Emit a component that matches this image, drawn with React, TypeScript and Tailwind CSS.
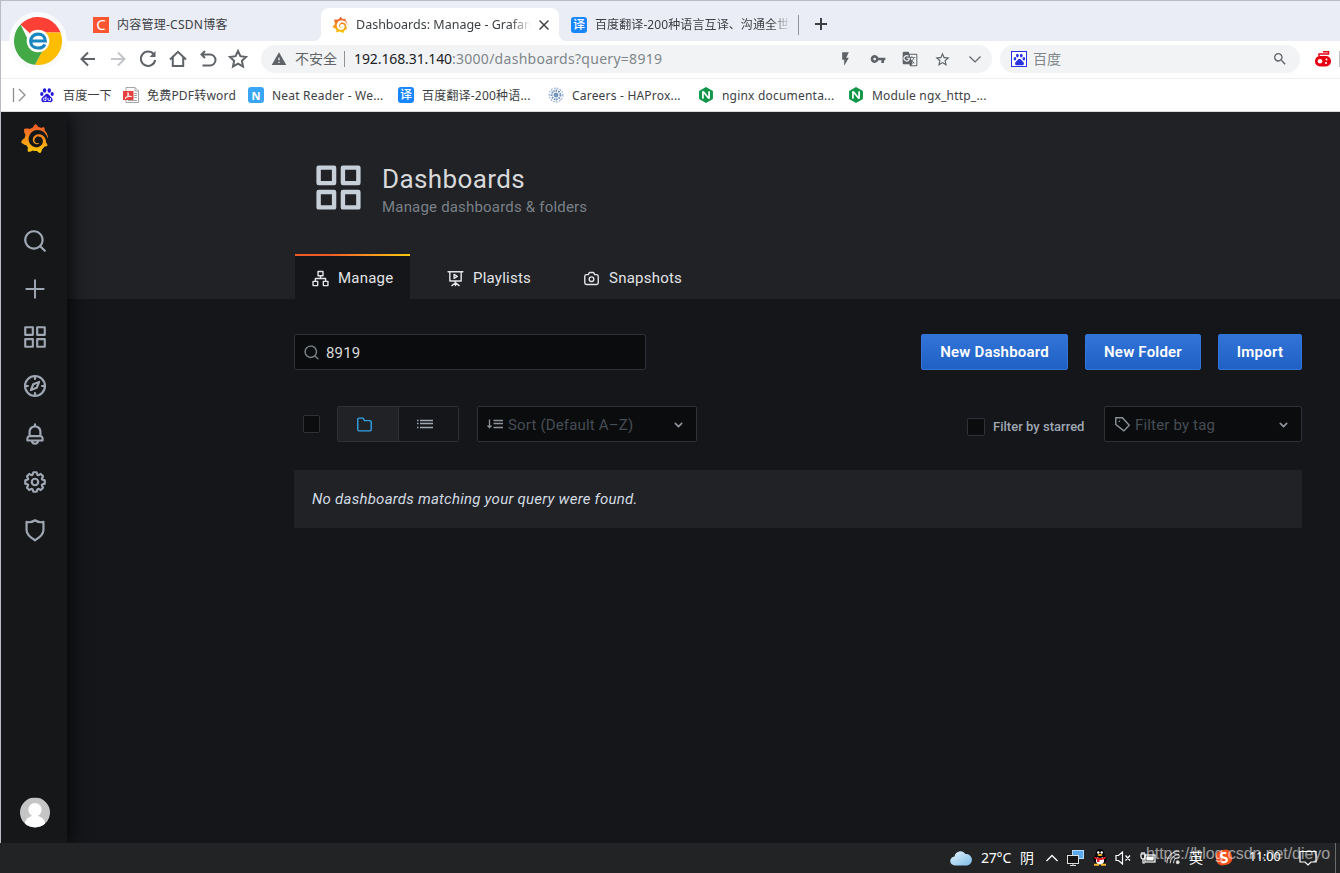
import React from 'react'
import { SiGrafana, SiNginx } from 'react-icons/si'
import { MdFlashOn, MdVpnKey, MdGTranslate, MdStarBorder, MdSearch, MdWarning } from 'react-icons/md'

const UI_FONT = "font-['Noto_Sans','Noto_Sans_CJK_SC',sans-serif]"

type IconProps = { className?: string; children?: React.ReactNode }

// 24x24 solid icon
const Solid: React.FC<IconProps & { d: string }> = ({ className, d }) => (
  <svg viewBox="0 0 24 24" className={className} fill="currentColor">
    <path d={d} />
  </svg>
)

// 24x24 outline icon
const Line: React.FC<IconProps & { width?: number }> = ({ className, width = 2, children }) => (
  <svg
    viewBox="0 0 24 24"
    className={className}
    fill="none"
    stroke="currentColor"
    strokeWidth={width}
    strokeLinecap="round"
    strokeLinejoin="round"
  >
    {children}
  </svg>
)

const paths = {
  search:
    'M21.71,20.29,18,16.61A9,9,0,1,0,16.61,18l3.68,3.68a1,1,0,0,0,1.42,0A1,1,0,0,0,21.71,20.29ZM11,18a7,7,0,1,1,7-7A7,7,0,0,1,11,18Z',
  apps: 'M10,13H3a1,1,0,0,0-1,1v7a1,1,0,0,0,1,1h7a1,1,0,0,0,1-1V14A1,1,0,0,0,10,13ZM9,20H4V15H9ZM21,2H14a1,1,0,0,0-1,1v7a1,1,0,0,0,1,1h7a1,1,0,0,0,1-1V3A1,1,0,0,0,21,2ZM20,9H15V4h5Zm1,4H14a1,1,0,0,0-1,1v7a1,1,0,0,0,1,1h7a1,1,0,0,0,1-1V14A1,1,0,0,0,21,13Zm-1,7H15V15h5ZM10,2H3A1,1,0,0,0,2,3v7a1,1,0,0,0,1,1h7a1,1,0,0,0,1-1V3A1,1,0,0,0,10,2ZM9,9H4V4H9Z',
  bell: 'M18,13.18V10a6,6,0,0,0-5-5.91V3a1,1,0,0,0-2,0V4.09A6,6,0,0,0,6,10v3.18A3,3,0,0,0,4,16v2a1,1,0,0,0,1,1H8.14a4,4,0,0,0,7.72,0H19a1,1,0,0,0,1-1V16A3,3,0,0,0,18,13.18ZM8,10a4,4,0,0,1,8,0v3H8Zm4,10a2,2,0,0,1-1.72-1h3.44A2,2,0,0,1,12,20Zm6-3H6V16a1,1,0,0,1,1-1H17a1,1,0,0,1,1,1Z',
  cog: 'M21.32,9.55l-1.89-.63.89-1.78A1,1,0,0,0,20.13,6L18,3.87a1,1,0,0,0-1.15-.19l-1.78.89-.63-1.89A1,1,0,0,0,13.5,2h-3a1,1,0,0,0-.95.68L8.92,4.57,7.14,3.68A1,1,0,0,0,6,3.87L3.87,6a1,1,0,0,0-.19,1.15l.89,1.78-1.89.63A1,1,0,0,0,2,10.5v3a1,1,0,0,0,.68.95l1.89.63-.89,1.78A1,1,0,0,0,3.87,18L6,20.13a1,1,0,0,0,1.15.19l1.78-.89.63,1.89a1,1,0,0,0,.95.68h3a1,1,0,0,0,.95-.68l.63-1.89,1.78.89A1,1,0,0,0,18,20.13L20.13,18a1,1,0,0,0,.19-1.15l-.89-1.78,1.89-.63A1,1,0,0,0,22,13.5v-3A1,1,0,0,0,21.32,9.55ZM20,12.78l-1.2.4A2,2,0,0,0,17.64,16l.57,1.14-1.1,1.1L16,17.64a2,2,0,0,0-2.79,1.16l-.4,1.2H11.22l-.4-1.2A2,2,0,0,0,8,17.64l-1.14.57-1.1-1.1L6.36,16A2,2,0,0,0,5.2,13.18L4,12.78V11.22l1.2-.4A2,2,0,0,0,6.36,8L5.79,6.89l1.1-1.1L8,6.36A2,2,0,0,0,10.82,5.2l.4-1.2h1.56l.4,1.2A2,2,0,0,0,16,6.36l1.14-.57,1.1,1.1L17.64,8a2,2,0,0,0,1.16,2.79l1.2.4ZM12,8a4,4,0,1,0,4,4A4,4,0,0,0,12,8Zm0,6a2,2,0,1,1,2-2A2,2,0,0,1,12,14Z',
}

const Paw: React.FC<IconProps> = ({ className }) => (
  <svg viewBox="0 0 16 16" className={className} fill="currentColor">
    <ellipse cx="5.4" cy="3.2" rx="1.7" ry="2.3" />
    <ellipse cx="10.2" cy="3.2" rx="1.7" ry="2.3" />
    <ellipse cx="2.4" cy="7" rx="1.6" ry="2.1" />
    <ellipse cx="13.4" cy="7" rx="1.6" ry="2.1" />
    <path d="M8 7.2c-1.6 0-2.2 1.5-3.4 2.6S2.3 12 2.6 13.400c.3 1.400 1.700 1.900 3 1.700 1.600-.2 3.200-.2 4.800 0 1.300.2 2.700-.3 3-1.700.3-1.400-.8-2.500-2-3.600S9.600 7.200 8 7.200z" />
  </svg>
)

// the bookmark's paw has the small "du" cut out of the pad
const BaiduIcon = () => (
  <svg viewBox="0 0 16 16" className="size-4 shrink-0">
    <g fill="#2319dc">
      <ellipse cx="5.600" cy="3.500" rx="1.700" ry="2.300" />
      <ellipse cx="10.300" cy="3.500" rx="1.700" ry="2.300" />
      <ellipse cx="2.800" cy="7" rx="1.600" ry="2" />
      <ellipse cx="13.200" cy="7" rx="1.600" ry="2" />
      <path d="M8 6.800c-1.600 0-2.200 1.500-3.400 2.500S2 11.500 2.400 13.400c.3 1.400 1.700 1.900 3 1.700h5.200c1.300.2 2.700-.3 3-1.700.4-1.900-1-3-2.200-4S9.600 6.800 8 6.800z" />
    </g>
    <path
      d="M7 9.500v4H5.600a1.200 1.200 0 0 1 0-2.500H7M9 11v1.500q0 1 1 1h1.500V11"
      fill="none"
      stroke="#fff"
      strokeWidth=".9"
    />
  </svg>
)

const GrafanaLogo: React.FC<IconProps> = ({ className }) => (
  <SiGrafana className={className} fill="url(#grafana-fill)" />
)

const YiBadge = () => (
  <span className="flex size-4 shrink-0 items-center justify-center rounded-[3px] bg-[#1786fb] text-[12px] leading-none font-medium text-white">
    译
  </span>
)

const PdfIcon = () => (
  <svg viewBox="0 0 16 16" className="size-4 shrink-0">
    <path d="M3 .5h9l3.500 3.500v11.500H3z" fill="#fff" stroke="#a5a5a5" />
    <path d="M12 .5V4h3.500M11 6.500h3M11 8.500h3M11 10.500h3M5 13.500h9" stroke="#a5a5a5" fill="none" />
    <rect y="4" width="10.500" height="9" fill="#e5403f" />
    <path d="M2 11.500C5 9.500 5.500 7 5 5.500 4.800 8 6 9.800 8.500 9.500 6 9 3.500 10 2 11.500z" stroke="#fff" fill="none" />
  </svg>
)

const HaproxyIcon = () => (
  <svg viewBox="0 0 16 16" className="size-4 shrink-0" fill="none" stroke="#6a8cb8">
    <circle cx="8" cy="8" r="6.900" strokeDasharray="1.800 1.200" strokeWidth="1.500" stroke="#b4c5db" />
    <circle cx="8" cy="8" r="4.400" strokeDasharray="1.500 1" strokeWidth="1.600" />
    <circle cx="8" cy="8" r="1.500" strokeWidth="1.400" />
    <path d="M3 3l10 10M13 3L3 13M8 1v14M1 8h14" strokeWidth=".5" />
  </svg>
)

const NeatIcon = () => (
  <span className="flex size-4 shrink-0 items-center justify-center rounded-[3px] bg-[#3aa5f5] text-[11px] leading-none font-bold text-white">
    N
  </span>
)

const NginxIcon = () => <SiNginx className="size-4 shrink-0 text-[#109648]" />

const BrowserLogo = () => (
  <svg viewBox="0 0 58 58" className="absolute top-[11px] left-[8px] size-[58px]">
    <circle cx="29" cy="29" r="29" fill="#fafbfd" />
    <path d="M29 29L11.500 12.600A24 24 0 0 1 51.500 20.500L29 20.500z" fill="#fd4035" />
    <path d="M29 20.500H51.500A24 24 0 0 1 26 52.800L36.400 33.300z" fill="#fdbe02" />
    <path d="M11.500 12.600A24 24 0 0 0 26 52.800L36 34 21.600 33.300z" fill="#43a846" />
    <circle cx="29" cy="29" r="11.300" fill="#fff" />
    <path
      d="M21.700 29H36.300C36.300 24.800 33.200 22.200 29 22.200S21.700 25.200 21.700 29.200 24.800 36 29 36C32.200 36 34.800 34.800 35.800 32.300"
      fill="none"
      stroke="#1a86c0"
      strokeWidth="3.200"
    />
  </svg>
)

const TabStrip = () => (
  <div className="flex h-10 bg-[#eaedf5] text-[12px] text-[#3c4043]">
    <div className="flex w-[320px] items-center pl-[92px] pt-[7px]">
      <span className="mr-2 flex size-4 items-center justify-center bg-[#fc5531] text-[15px] leading-none text-white">
        C
      </span>
      <span className="whitespace-nowrap tracking-[0.25px]">内容管理-CSDN博客</span>
    </div>
    <div className="relative mt-[7px] flex h-[33px] w-[238px] items-center rounded-t-lg bg-white pl-[11px] pr-[9px]">
      <span className="absolute bottom-0 -left-2 size-2 bg-[radial-gradient(circle_at_0_0,transparent_8px,white_8.5px)]" />
      <span className="absolute -right-2 bottom-0 size-2 bg-[radial-gradient(circle_at_100%_0,transparent_8px,white_8.5px)]" />
      <GrafanaLogo className="size-4 shrink-0" />
      <span className="ml-2 w-[175px] overflow-hidden pt-px whitespace-nowrap [mask-image:linear-gradient(to_right,black_155px,transparent_175px)] text-[12.5px]">
        Dashboards: Manage - Grafana
      </span>
      <Line className="ml-auto size-3 text-[#3c4043]" width={3}>
        <path d="M4 4l16 16M20 4L4 20" />
      </Line>
    </div>
    <div className="flex w-[240px] items-center pl-3 pt-[7px]">
      <YiBadge />
      <span className="ml-2 w-[196px] overflow-hidden whitespace-nowrap [mask-image:linear-gradient(to_right,black_176px,transparent_196px)] tracking-[0.1px]">
        百度翻译-200种语言互译、沟通全世界
      </span>
      <span className="ml-auto h-5 w-px shrink-0 bg-[#8f939b]" />
    </div>
    <div className="flex items-center pl-4 pt-[6px]">
      <svg viewBox="0 0 12 12" className="size-3" stroke="#3c4043" strokeWidth="2">
        <path d="M6 0v12M0 6h12" />
      </svg>
    </div>
  </div>
)

const NavButton: React.FC<IconProps> = ({ className = 'text-[#5f6368]', children }) => (
  <span className={`flex w-[30px] items-center justify-center ${className}`}>
    <svg
      viewBox="0 0 20 20"
      className="size-5"
      fill="none"
      stroke="currentColor"
      strokeWidth="2"
    >
      {children}
    </svg>
  </span>
)

const AddressBar = () => (
  <div className="flex h-[38px] border-b border-[#edeff1] bg-white pl-[72px] pt-1 pb-1">
    <div className="flex h-7 w-[188px]">
      <NavButton>
        <path d="M17 10H4M10 3.500L3.500 10l6.500 6.500" />
      </NavButton>
      <NavButton className="text-[#c3c5c8]">
        <path d="M3 10h13M10 3.500l6.500 6.500-6.500 6.500" />
      </NavButton>
      <NavButton>
        <path d="M15.800 5.300A7.200 7.200 0 1 0 17.200 11" />
        <path d="M17.500 2v6h-6z" fill="currentColor" stroke="none" />
      </NavButton>
      <NavButton>
        <path d="M2 10.500L10 2.800l8 7.700M4.800 8.500v8.500h10.400V8.500" />
      </NavButton>
      <NavButton>
        <path d="M7 2L3.500 5.500 7 9M3.500 5.500H12a5.500 5.500 0 0 1 0 11H4.500" />
      </NavButton>
      <NavButton>
        <path d="M10 2l2.400 5.200 5.600.7-4.100 3.900 1.100 5.700-5-2.800-5 2.800 1.100-5.700L2 7.900l5.600-.7z" />
      </NavButton>
    </div>
    <div className="flex h-7 w-[731px] items-center rounded-full bg-[#f1f3f4] pl-[10px] pr-[9px] text-[14px] text-[#5f6368]">
      <MdWarning className="size-4" />
      <span className="ml-2 w-[42px] pb-px whitespace-nowrap">不安全</span>
      <span className="ml-[7px] mr-[9px] h-4 w-px bg-[#8f9296]" />
      <span className="pb-[2px] whitespace-nowrap text-[#80868b] tracking-[0.28px]">
        <span className="tracking-[-0.1px] text-[#202124]">192.168.31.140</span>:3000/dashboards?query=8919
      </span>
      <span className="ml-auto flex items-center gap-4">
        <MdFlashOn className="h-4 w-[17px]" />
        <MdVpnKey className="size-4" />
        <MdGTranslate className="size-4" />
        <MdStarBorder className="size-[17px]" />
        <svg viewBox="0 0 16 16" className="size-4" fill="none" stroke="currentColor" strokeWidth="1.2">
          <path d="M2.500 5.500L8 11l5.500-5.500" />
        </svg>
      </span>
    </div>
    <div className="ml-2 flex h-7 w-[300px] items-center rounded-full bg-[#f1f3f4] pl-[11px] pr-3 text-[14px] text-[#80868b]">
      <span className="flex size-4 items-center justify-center border border-[#2932e1] bg-white">
        <Paw className="size-[13px] text-[#2932e1]" />
      </span>
      <span className="ml-[6px] pb-[2px]">百度</span>
      <MdSearch className="ml-auto size-4 text-[#5f6368]" />
    </div>
    <div className="flex h-7 flex-1 items-center justify-between pl-[15px]">
      <svg viewBox="0 0 16 16" className="size-4">
        <path d="M4 5.500V3h9.500V.8H8" fill="none" stroke="#e60012" strokeWidth="1.400" />
        <rect y="5" width="16" height="10.500" rx="5" fill="#e60012" />
        <circle cx="5" cy="10.200" r="2.300" fill="#fff" />
        <circle cx="11.500" cy="8.500" r="1" fill="#fff" />
        <circle cx="11" cy="12" r="1.100" fill="#fff" />
      </svg>
      <span className="h-4 w-px bg-[#c0c2c6]" />
    </div>
  </div>
)

const bookmarks = [
  { label: '百度一下', icon: <BaiduIcon />, width: 'w-[84px]' },
  { label: '免费PDF转word', icon: <PdfIcon />, width: 'w-[125px]' },
  { label: 'Neat Reader - We...', icon: <NeatIcon />, width: 'w-[150px]' },
  { label: '百度翻译-200种语...', icon: <YiBadge />, width: 'w-[150px]' },
  { label: 'Careers - HAProx...', icon: <HaproxyIcon />, width: 'w-[150px]' },
  { label: 'nginx documenta...', icon: <NginxIcon />, width: 'w-[150px]' },
  { label: 'Module ngx_http_...', icon: <NginxIcon />, width: 'w-[150px]' },
]

const BookmarksBar = () => (
  <div className="flex h-[33px] items-center border-b border-[#d9dbde] bg-white pl-[11px] text-[12px] text-[#3c4043]">
    <svg viewBox="0 0 16 16" className="mr-[11px] size-4" fill="none" stroke="#8a8d91" strokeWidth="1.300">
      <path d="M1.500 1v14M7 2l6 6-6 6" />
    </svg>
    {bookmarks.map((b) => (
      <div key={b.label} className={`flex items-center gap-2 whitespace-nowrap tracking-[0.2px] ${b.width}`}>
        {b.icon}
        <span className="pt-px">{b.label}</span>
      </div>
    ))}
  </div>
)

const Sidebar = () => (
  <nav className="z-10 flex w-[66px] shrink-0 flex-col items-center bg-[#161719] pl-[2px] text-[#9fa7b3] shadow-[0_0_20px_black]">
    <GrafanaLogo className="mt-3 mr-[2px] size-[29px]" />
    <div className="mt-[75px] flex flex-col gap-[22.200px]">
      <Solid className="size-[26px]" d={paths.search} />
      <Line className="size-[26px]" width={1.8}>
        <path d="M12 4v16M4 12h16" />
      </Line>
      <Solid className="size-[26px]" d={paths.apps} />
      <Line className="size-[26px]">
        <circle cx="12" cy="12" r="9.200" />
        <path d="M12 3v2.500M12 18.500V21M3 12h2.500M18.500 12H21" />
        <path d="M15.800 8.200l-2.200 5.400-5.400 2.200 2.200-5.400z" />
      </Line>
      <Solid className="size-[26px]" d={paths.bell} />
      <Solid className="size-[26px]" d={paths.cog} />
      <Line className="size-[26px]">
        <path d="M4.200 4.500C7 5.300 9.500 4.700 12 3c2.500 1.700 5 2.300 7.800 1.500v7.500c0 4-3 6.600-7.800 9.500-4.800-2.900-7.800-5.500-7.800-9.500z" />
      </Line>
    </div>
    <svg viewBox="0 0 30 30" className="mt-auto mr-px mb-[15px] h-[31px] w-[30px]">
      <clipPath id="avatar">
        <circle cx="15" cy="15" r="15" />
      </clipPath>
      <g clipPath="url(#avatar)">
        <rect width="30" height="30" fill="#c5c5c5" />
        <circle cx="15" cy="12.200" r="6.700" fill="#fff" />
        <ellipse cx="15" cy="27.500" rx="10.500" ry="9.500" fill="#fff" />
      </g>
    </svg>
  </nav>
)

const SitemapIcon = () => (
  <Line className="size-[17px]">
    <rect x="8.500" y="2" width="7" height="6" />
    <rect x="1.500" y="16" width="6.500" height="6" />
    <rect x="16" y="16" width="6.500" height="6" />
    <path d="M12 8v4M4.800 16v-4h14.400v4" />
  </Line>
)

const PlaylistIcon = () => (
  <Line className="size-[17px]">
    <path d="M1.500 2.500h21M4 2.500v13h16v-13M12 15.500V22M12 18l-5 4M12 18l5 4" />
    <path d="M10 6.200l4.500 2.800-4.500 2.800z" />
  </Line>
)

const CameraIcon = () => (
  <Line className="size-[17px]">
    <path d="M5 6.500h2.500l1.500-3h6l1.500 3H19a2.500 2.500 0 0 1 2.500 2.500v9a2.500 2.500 0 0 1-2.500 2.500H5A2.500 2.500 0 0 1 2.500 18V9A2.500 2.500 0 0 1 5 6.500z" />
    <circle cx="12" cy="13" r="3.300" />
  </Line>
)

const PageHeader = () => (
  <header className="flex h-[187px] flex-col justify-between bg-[#202226] pl-[227px]">
    <div className="flex pl-[18px] pt-[49px]">
      <Solid className="size-[53px] text-[#c7d0d9]" d={paths.apps} />
      <div className="ml-[17px] pt-px">
        <h1 className="text-[26px] leading-[34px] tracking-[0.4px] text-[#d8d9da]">Dashboards</h1>
        <div className="text-[15px] leading-[22px] tracking-[0.19px] text-[#7b8087]">
          Manage dashboards &amp; folders
        </div>
      </div>
    </div>
    <div className="flex gap-5 pl-px text-[15px] tracking-[0.23px] text-[#e3e4e6]">
      <div className="relative flex h-[45px] w-[115px] items-center gap-[9px] bg-[#141619] pl-[17px] pt-[3px]">
        <span className="absolute inset-x-0 top-0 h-[2px] bg-linear-to-r from-[#f05a28] from-30% to-[#fbca0a]" />
        <SitemapIcon />
        Manage
      </div>
      <div className="flex h-[45px] w-[117px] items-center gap-[9px] pl-[17px] pt-[3px]">
        <PlaylistIcon />
        Playlists
      </div>
      <div className="flex h-[45px] items-center gap-[9px] pl-4 pt-[3px]">
        <CameraIcon />
        Snapshots
      </div>
    </div>
  </header>
)

const Button: React.FC<{ width: string; children: React.ReactNode }> = ({ width, children }) => (
  <button
    className={`h-9 rounded-[2px] border border-[#3274d9] bg-linear-to-b from-[#3274d9] to-[#1f60c4] pt-px text-[15px] font-semibold tracking-[0.2px] whitespace-nowrap text-white ${width}`}
  >
    {children}
  </button>
)

const ChevronDown = () => (
  <Line className="ml-auto size-[17px] text-[#8e9299]" width={2.4}>
    <path d="M7.500 10.500l4.500 4.500 4.500-4.500" />
  </Line>
)

const Content = () => (
  <main className="flex-1 bg-[#141619] pl-[227px] pr-[38px] pt-[35px]">
    <div className="flex justify-between">
      <div className="flex h-9 w-[352px] items-center rounded-[2px] border border-[#2c3235] bg-[#0b0c0e] pl-2 text-[15px] text-[#d8d9da]">
        <Solid className="size-[17px] text-[#7b8087]" d={paths.search} />
        <span className="ml-[6px] pt-[2px]">8919</span>
      </div>
      <div className="flex gap-[17px]">
        <Button width="w-[147px]">New Dashboard</Button>
        <Button width="w-[116px]">New Folder</Button>
        <Button width="w-[84px]">Import</Button>
      </div>
    </div>

    <div className="mt-9 flex h-9 items-center">
      <span className="ml-[9px] h-[18px] w-[17px] rounded-[2px] border border-[#2c3235] bg-[#0b0c0e]" />
      <div className="ml-[17px] flex h-9 w-[122px] rounded-[2px] border border-[#2c3235] text-[#8e9299]">
        <span className="flex w-[61px] items-center justify-center border-r border-[#2c3235] bg-[#202226] pr-[7px]">
          <Line className="size-[17px] text-[#33a2e5]">
            <path d="M4 3h6l2 3.500h7.500a2 2 0 0 1 2 2V19a2 2 0 0 1-2 2h-15a2 2 0 0 1-2-2V4.500A1.500 1.500 0 0 1 4 3z" />
          </Line>
        </span>
        <span className="flex flex-1 items-center justify-center pr-2">
          <svg viewBox="0 0 16 10" className="h-[10px] w-4" stroke="#9fa7b3" fill="none">
            <path d="M3 1.500h13M3 4.500h13M3 8.500h13M0 1.500h1.500M0 4.500h1.500M0 8.500h1.500" strokeWidth="1.300" />
          </svg>
        </span>
      </div>
      <div className="ml-[18px] flex h-9 w-[220px] items-center rounded-[2px] border border-[#2c3235] bg-[#0b0c0e] pl-[9px] pr-[9px] text-[15px] text-[#464c54]">
        <svg viewBox="0 0 17 10" className="h-[10px] w-[17px]" stroke="#8e9299" fill="none">
          <path d="M2.500 .5v8M.5 6.500l2 2 2-2" strokeWidth="1.300" />
          <path d="M6.500 1.500H16M6.500 4.500H16M6.500 8.500H16" strokeWidth="1.300" />
        </svg>
        <span className="ml-1 pt-[2px] whitespace-nowrap">Sort (Default A–Z)</span>
        <ChevronDown />
      </div>
      <span className="ml-auto mt-[5px] size-[18px] rounded-[2px] border border-[#2c3235] bg-[#0b0c0e]" />
      <span className="ml-2 mt-[5px] w-[92px] text-[13px] font-medium tracking-[0.02px] whitespace-nowrap text-[#9fa7b3]">
        Filter by starred
      </span>
      <div className="ml-[19px] flex h-9 w-[198px] items-center rounded-[2px] border border-[#2c3235] bg-[#0b0c0e] pl-[9px] pr-[9px] text-[15px] text-[#464c54]">
        <Line className="size-[17px] text-[#8e9299]">
          <path d="M2.500 2.500h9.500l9.500 10.500-7.500 8L2.500 12z" />
          <path d="M7.500 7.500h.2" />
        </Line>
        <span className="ml-1 pt-[2px]">Filter by tag</span>
        <ChevronDown />
      </div>
    </div>

    <div className="mt-7 flex h-[58px] items-center bg-[#202226] pl-[18px] text-[15px] tracking-[0.24px] text-[#d3dae2] italic">
      No dashboards matching your query were found.
    </div>
  </main>
)

const Taskbar = () => (
  <footer className="relative flex h-[30px] items-center bg-[#222325] pb-px pl-[950px] text-[14px] text-white">
    <svg viewBox="0 0 22 16" className="h-4 w-[22px]">
      <defs>
        <linearGradient id="cloud" x1="0" y1="0" x2="1" y2="1">
          <stop stopColor="#e6f5fd" />
          <stop offset="1" stopColor="#7dbce9" />
        </linearGradient>
      </defs>
      <path d="M5 15.500a4.500 4.500 0 0 1-.5-9A6 6 0 0 1 15.500 4a5.800 5.800 0 0 1 1.500 11.500z" fill="url(#cloud)" />
    </svg>
    <span className="ml-[9px] w-[31px] whitespace-nowrap tracking-[-0.2px]">27°C</span>
    <span className="ml-2 w-[14px]">阴</span>
    <svg viewBox="0 0 12 12" className="ml-3 size-3" fill="none" stroke="#fff" strokeWidth="1.300">
      <path d="M.5 9L6 3.500 11.500 9" />
    </svg>
    <svg viewBox="0 0 17 16" className="ml-[9px] h-4 w-[17px]">
      <rect x="5.500" y=".5" width="11" height="8" fill="#5aa9ec" stroke="#b5dafa" />
      <rect x=".5" y="5.500" width="11" height="8" fill="#151515" stroke="#ddd" />
      <path d="M3 15.500h6M6 13.500v2" stroke="#ddd" />
    </svg>
    <svg viewBox="0 0 16 17" className="ml-2 h-[17px] w-4">
      <ellipse cx="8" cy="10" rx="6.500" ry="5.500" fill="#050505" />
      <ellipse cx="8" cy="11.500" rx="4" ry="4" fill="#fff" />
      <ellipse cx="8" cy="4.500" rx="4.300" ry="4.500" fill="#050505" />
      <circle cx="6.300" cy="3.500" r="1.200" fill="#fff" />
      <circle cx="9.700" cy="3.500" r="1.200" fill="#fff" />
      <ellipse cx="8" cy="6" rx="2.600" ry="1" fill="#f8b52a" />
      <path d="M2.500 7.500c4 2 7 2 11 0v2.300c-2 1-5 1.400-6 1.200V13H5v-2.500l-2.500-1z" fill="#e5202b" />
      <path d="M2 15.700h5M9 15.700h5" stroke="#f8b52a" strokeWidth="2" />
    </svg>
    <svg viewBox="0 0 16 14" className="ml-[7px] h-[14px] w-4" fill="none" stroke="#fff" strokeWidth="1.200">
      <path d="M1 4.500h2.500l4-3.500v12l-4-3.500H1zM10.500 4.500l4.500 5M15 4.500l-4.500 5" />
    </svg>
    <svg viewBox="0 0 16 14" className="ml-[9px] h-[14px] w-4" fill="none" stroke="#fff" strokeWidth="1.200">
      <rect x="5" y="4" width="10" height="7" />
      <path d="M7 6h6v3H7z" fill="#fff" />
      <path d="M1 3h4v3a2 2 0 0 1-4 0zM2 1v2M4 1v2M3 8v4h2" />
    </svg>
    <svg viewBox="0 0 16 16" className="ml-[10px] size-[15px]" fill="none" stroke="#c5c5c5" strokeWidth="1.200">
      <path d="M1 14C1 7 7 1 14 1M4.500 14c0-5 4.500-9.500 9.500-9.500M8 14c0-3.500 2.500-6 6-6" />
      <circle cx="12.500" cy="13" r="1.500" fill="#fff" />
    </svg>
    <span className="ml-2 w-[14px]">英</span>
    <span className="ml-[13px] flex h-[15px] w-4 -rotate-12 items-center justify-center rounded-[6px] bg-[#f4511e] text-[15px] leading-none font-bold text-white">
      S
    </span>
    <span className="ml-[17px] w-[34px] text-[12.5px] tracking-[-0.1px] whitespace-nowrap">11:00</span>
    <svg viewBox="0 0 18 16" className="ml-4 h-4 w-[18px]" fill="none" stroke="#fff" strokeWidth="1.200">
      <path d="M1 1.500h16v10.500h-5l-3 3-3-3H1z" />
    </svg>
    <span className="absolute right-1 bottom-0 h-[30px] w-px bg-[#6b6c6e]" />
    <span className="absolute top-0 left-[1146px] font-['Liberation_Sans',sans-serif] text-[16px] leading-[22px] tracking-[-0.07px] whitespace-nowrap text-white/55">
      https://blog.csdn.net/dieyo
    </span>
  </footer>
)

const App: React.FC = () => {
  return (
    <div className={`flex h-[873px] w-[1340px] flex-col overflow-hidden bg-[#141619] ${UI_FONT}`}>
      <svg className="absolute size-0">
        <linearGradient id="grafana-fill" x1="0" y1="0" x2="0" y2="1">
          <stop offset="0.05" stopColor="#f05a28" />
          <stop offset="1" stopColor="#fbca0a" />
        </linearGradient>
      </svg>
      <div className="relative flex flex-1 flex-col border-t border-l border-[#b9bcc5]">
        <TabStrip />
        <AddressBar />
        <BookmarksBar />
        <BrowserLogo />
        <div className="flex flex-1 overflow-hidden font-[Roboto,sans-serif] tracking-[0.01071em]">
          <Sidebar />
          <div className="flex flex-1 flex-col">
            <PageHeader />
            <Content />
          </div>
        </div>
      </div>
      <Taskbar />
    </div>
  )
}

export default App
